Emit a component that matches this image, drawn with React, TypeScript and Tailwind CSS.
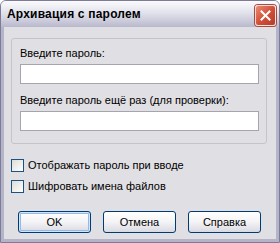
import React from "react";

const font = { fontFamily: '"Liberation Sans", Arial, sans-serif' };

function Checkbox({ label }: { label: string }) {
  return (
    <label className="flex items-center gap-[4px] h-[13px]">
      <span className="w-[13px] h-[13px] border border-[#1c5180] bg-gradient-to-br from-[#dcdcd7] to-white shrink-0" />
      <span className="text-[11px] leading-[13px] text-black">{label}</span>
    </label>
  );
}

function Button({ children, isDefault }: { children: React.ReactNode; isDefault?: boolean }) {
  return (
    <button
      className={
        "w-[73px] h-[22px] rounded-[3px] border border-[#003c74] bg-gradient-to-b from-white via-[#f4f4f6] to-[#d9d9e2] text-[11px] leading-none text-black " +
        (isDefault ? "shadow-[inset_0_0_0_1px_#cee7ff,inset_0_0_0_2px_#98b8ea]" : "")
      }
    >
      {children}
    </button>
  );
}

export default function App() {
  return (
    <div style={font} className="w-[280px] h-[243px] flex flex-col bg-[#e0dfe3] border border-[#7c7c98] rounded-t-[6px] overflow-hidden">
      <div className="h-[26px] shrink-0 flex items-center justify-between pl-[6px] pr-[3px] bg-gradient-to-b from-[#fbfbfd] via-[#dfdfea] to-[#b9b9cd]">
        <span className="text-[12px] font-bold text-black tracking-[0.2px]">Архивация с паролем</span>
        <span className="w-[21px] h-[21px] mt-[3px] rounded-[3px] border border-white/80 bg-gradient-to-br from-[#e88a74] via-[#d2503a] to-[#b63a2a] flex items-center justify-center shadow-[0_0_0_1px_#a84a40]">
          <svg width="11" height="11" viewBox="0 0 11 11">
            <path d="M1.5 1.5 L9.5 9.5 M9.5 1.5 L1.5 9.5" stroke="white" strokeWidth="2" strokeLinecap="square" />
          </svg>
        </span>
      </div>
      <div className="flex-1 flex flex-col border-x-[3px] border-b-[3px] border-[#b4b4c8] pl-[7px] pr-[9px]">
        <div className="mt-[11px] h-[106px] border border-[#c5c5c9] rounded-[3px] pl-[8px] pr-[7px] pt-[8px] flex flex-col">
          <div className="text-[11px] leading-[13px] text-black">Введите пароль:</div>
          <div className="mt-[4px] h-[20px] border border-[#a5a5ad] bg-white" />
          <div className="mt-[10px] text-[11px] leading-[13px] text-black">Введите пароль ещё раз (для проверки):</div>
          <div className="mt-[4px] h-[20px] border border-[#a5a5ad] bg-white" />
        </div>
        <div className="mt-[15px] flex flex-col gap-[8px]">
          <Checkbox label="Отображать пароль при вводе" />
          <Checkbox label="Шифровать имена файлов" />
        </div>
        <div className="mt-[18px] pl-[7px] flex gap-[12px]">
          <Button isDefault>OK</Button>
          <Button>Отмена</Button>
          <Button>Справка</Button>
        </div>
      </div>
    </div>
  );
}
